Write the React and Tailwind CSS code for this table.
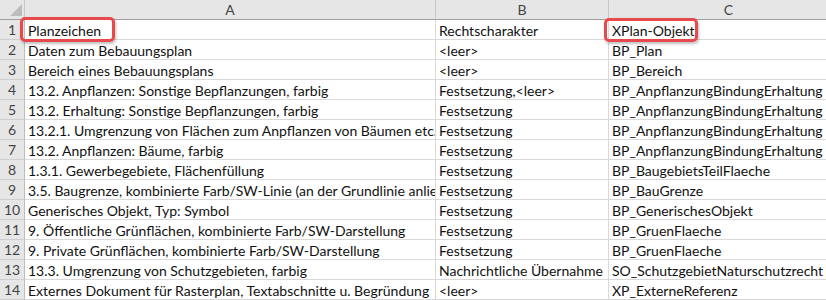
import React from 'react'

const rows = [
  ['Planzeichen', 'Rechtscharakter', 'XPlan-Objekt'],
  ['Daten zum Bebauungsplan', '<leer>', 'BP_Plan'],
  ['Bereich eines Bebauungsplans', '<leer>', 'BP_Bereich'],
  ['13.2. Anpflanzen: Sonstige Bepflanzungen, farbig', 'Festsetzung,<leer>', 'BP_AnpflanzungBindungErhaltung'],
  ['13.2. Erhaltung: Sonstige Bepflanzungen, farbig', 'Festsetzung', 'BP_AnpflanzungBindungErhaltung'],
  ['13.2.1. Umgrenzung von Flächen zum Anpflanzen von Bäumen etc.', 'Festsetzung', 'BP_AnpflanzungBindungErhaltung'],
  ['13.2. Anpflanzen: Bäume, farbig', 'Festsetzung', 'BP_AnpflanzungBindungErhaltung'],
  ['1.3.1. Gewerbegebiete, Flächenfüllung', 'Festsetzung', 'BP_BaugebietsTeilFlaeche'],
  ['3.5. Baugrenze, kombinierte Farb/SW-Linie (an der Grundlinie anliegend)', 'Festsetzung', 'BP_BauGrenze'],
  ['Generisches Objekt, Typ: Symbol', 'Festsetzung', 'BP_GenerischesObjekt'],
  ['9. Öffentliche Grünflächen, kombinierte Farb/SW-Darstellung', 'Festsetzung', 'BP_GruenFlaeche'],
  ['9. Private Grünflächen, kombinierte Farb/SW-Darstellung', 'Festsetzung', 'BP_GruenFlaeche'],
  ['13.3. Umgrenzung von Schutzgebieten, farbig', 'Nachrichtliche Übernahme', 'SO_SchutzgebietNaturschutzrecht'],
  ['Externes Dokument für Rasterplan, Textabschnitte u. Begründung', '<leer>', 'XP_ExterneReferenz'],
]

export default function App() {
  return (
    <div className="relative h-[300px] w-[826px] overflow-hidden bg-white font-['Lato',sans-serif] text-[14px] text-[#111]">
      <div className="grid grid-cols-[25px_411px_173px_240px] grid-rows-[20px] auto-rows-[20px]">
        {/* header row */}
        <div className="relative border-b border-r border-b-[#9f9f9f] border-r-[#c8c8c8] bg-[#e6e6e6]">
          <div className="absolute bottom-[3px] right-[2px] h-0 w-0 border-b-[12px] border-l-[12px] border-b-[#bdbdbd] border-l-transparent" />
        </div>
        {['A', 'B', 'C'].map(h => (
          <div
            key={h}
            className="flex items-center justify-center border-b border-r border-b-[#9f9f9f] border-r-[#c8c8c8] bg-[#e6e6e6] text-[14px] text-[#444]"
          >
            {h}
          </div>
        ))}

        {/* body rows */}
        {rows.map((r, i) => (
          <React.Fragment key={i}>
            <div className="flex items-center justify-center border-b border-r border-b-[#cfcfcf] border-r-[#bdbdbd] bg-[#e6e6e6] text-[14px] text-[#444]">
              {i + 1}
            </div>
            {r.map((c, j) => (
              <div
                key={j}
                className="flex items-center overflow-hidden whitespace-nowrap border-b border-r border-[#d9d9d9] pl-[3px] pt-[1px]"
              >
                {c}
              </div>
            ))}
          </React.Fragment>
        ))}
      </div>

      {/* highlight boxes */}
      <div className="absolute left-[20px] top-[17px] h-[25px] w-[95px] rounded-[5px] border-[3px] border-[#e8494d] shadow-[1px_2px_3px_rgba(0,0,0,0.25)]" />
      <div className="absolute left-[604px] top-[18px] h-[24px] w-[94px] rounded-[5px] border-[3px] border-[#e8494d] shadow-[1px_2px_3px_rgba(0,0,0,0.25)]" />
    </div>
  )
}
